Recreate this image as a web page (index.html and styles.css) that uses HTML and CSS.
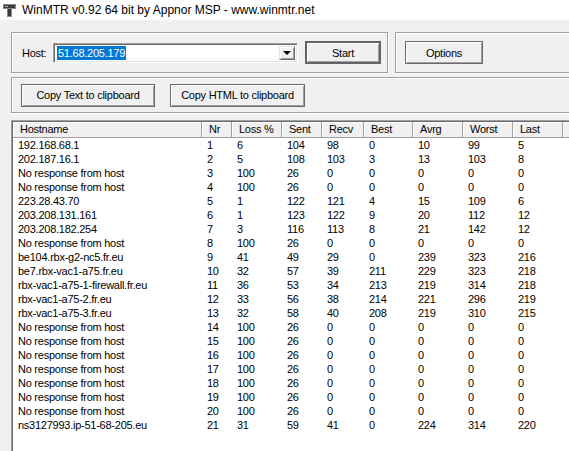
FILE: index.html
```html
<!DOCTYPE html>
<html>
<head>
<meta charset="utf-8">
<link rel="stylesheet" href="styles.css">
</head>
<body>
<div class="window">
  <div class="titlebar">
    <svg class="appicon" width="16" height="16" viewBox="0 0 16 16">
      <rect x="2.5" y="2.5" width="12" height="4" fill="#3a3a3a" stroke="#8a8a8a"/>
      <rect x="6.5" y="6.5" width="4" height="8" fill="#3a3a3a" stroke="#8a8a8a"/>
      <rect x="4" y="4" width="3" height="1" fill="#bbbbbb"/>
    </svg>
    <span class="title">WinMTR v0.92 64 bit by Appnor MSP - www.winmtr.net</span>
  </div>
  <div class="client">
    <div class="row1">
      <div class="group hostgroup">
        <span class="label">Host:</span>
        <div class="combo">
          <div class="combo-text"><span class="sel">51.68.205.179</span></div>
          <div class="combo-btn"><span class="arrow"></span></div>
        </div>
        <button class="btn default start">Start</button>
      </div>
      <div class="group optgroup">
        <button class="btn options">Options</button>
      </div>
    </div>
    <div class="group copygroup">
      <button class="btn copytext">Copy Text to clipboard</button>
      <button class="btn copyhtml">Copy HTML to clipboard</button>
    </div>
    <div class="list">
      <div class="grid header">
        <div class="hc">Hostname</div><div class="hc">Nr</div><div class="hc">Loss %</div><div class="hc">Sent</div><div class="hc">Recv</div><div class="hc">Best</div><div class="hc">Avrg</div><div class="hc">Worst</div><div class="hc">Last</div><div class="hc rest"></div>
      </div>
      <div class="rows">
        <div class="grid row"><div>192.168.68.1</div><div>1</div><div>6</div><div>104</div><div>98</div><div>0</div><div>10</div><div>99</div><div>5</div></div>
        <div class="grid row"><div>202.187.16.1</div><div>2</div><div>5</div><div>108</div><div>103</div><div>3</div><div>13</div><div>103</div><div>8</div></div>
        <div class="grid row"><div>No response from host</div><div>3</div><div>100</div><div>26</div><div>0</div><div>0</div><div>0</div><div>0</div><div>0</div></div>
        <div class="grid row"><div>No response from host</div><div>4</div><div>100</div><div>26</div><div>0</div><div>0</div><div>0</div><div>0</div><div>0</div></div>
        <div class="grid row"><div>223.28.43.70</div><div>5</div><div>1</div><div>122</div><div>121</div><div>4</div><div>15</div><div>109</div><div>6</div></div>
        <div class="grid row"><div>203.208.131.161</div><div>6</div><div>1</div><div>123</div><div>122</div><div>9</div><div>20</div><div>112</div><div>12</div></div>
        <div class="grid row"><div>203.208.182.254</div><div>7</div><div>3</div><div>116</div><div>113</div><div>8</div><div>21</div><div>142</div><div>12</div></div>
        <div class="grid row"><div>No response from host</div><div>8</div><div>100</div><div>26</div><div>0</div><div>0</div><div>0</div><div>0</div><div>0</div></div>
        <div class="grid row"><div>be104.rbx-g2-nc5.fr.eu</div><div>9</div><div>41</div><div>49</div><div>29</div><div>0</div><div>239</div><div>323</div><div>216</div></div>
        <div class="grid row"><div>be7.rbx-vac1-a75.fr.eu</div><div>10</div><div>32</div><div>57</div><div>39</div><div>211</div><div>229</div><div>323</div><div>218</div></div>
        <div class="grid row"><div>rbx-vac1-a75-1-firewall.fr.eu</div><div>11</div><div>36</div><div>53</div><div>34</div><div>213</div><div>219</div><div>314</div><div>218</div></div>
        <div class="grid row"><div>rbx-vac1-a75-2.fr.eu</div><div>12</div><div>33</div><div>56</div><div>38</div><div>214</div><div>221</div><div>296</div><div>219</div></div>
        <div class="grid row"><div>rbx-vac1-a75-3.fr.eu</div><div>13</div><div>32</div><div>58</div><div>40</div><div>208</div><div>219</div><div>310</div><div>215</div></div>
        <div class="grid row"><div>No response from host</div><div>14</div><div>100</div><div>26</div><div>0</div><div>0</div><div>0</div><div>0</div><div>0</div></div>
        <div class="grid row"><div>No response from host</div><div>15</div><div>100</div><div>26</div><div>0</div><div>0</div><div>0</div><div>0</div><div>0</div></div>
        <div class="grid row"><div>No response from host</div><div>16</div><div>100</div><div>26</div><div>0</div><div>0</div><div>0</div><div>0</div><div>0</div></div>
        <div class="grid row"><div>No response from host</div><div>17</div><div>100</div><div>26</div><div>0</div><div>0</div><div>0</div><div>0</div><div>0</div></div>
        <div class="grid row"><div>No response from host</div><div>18</div><div>100</div><div>26</div><div>0</div><div>0</div><div>0</div><div>0</div><div>0</div></div>
        <div class="grid row"><div>No response from host</div><div>19</div><div>100</div><div>26</div><div>0</div><div>0</div><div>0</div><div>0</div><div>0</div></div>
        <div class="grid row"><div>No response from host</div><div>20</div><div>100</div><div>26</div><div>0</div><div>0</div><div>0</div><div>0</div><div>0</div></div>
        <div class="grid row"><div>ns3127993.ip-51-68-205.eu</div><div>21</div><div>31</div><div>59</div><div>41</div><div>0</div><div>224</div><div>314</div><div>220</div></div>
      </div>
    </div>
  </div>
</div>
</body>
</html>
```

FILE: styles.css
```css
* { box-sizing: border-box; }
html, body {
  margin: 0;
  padding: 0;
  width: 569px;
  height: 451px;
  overflow: hidden;
  background: #f0f0f0;
}
.window {
  width: 569px;
  height: 451px;
  overflow: hidden;
  font-family: "Liberation Sans", Arial, sans-serif;
  font-size: 11px;
  letter-spacing: -0.25px;
  color: #000;
}
.titlebar {
  height: 20px;
  background: #fff;
  display: flex;
  align-items: center;
  padding-left: 1px;
}
.appicon { flex: none; }
.title {
  margin-left: 5px;
  font-family: "Liberation Sans", Arial, sans-serif;
  font-size: 12px;
  letter-spacing: 0;
  color: #000;
  white-space: nowrap;
}
.client {
  padding-left: 11px;
  width: 700px;
}
.row1 {
  display: flex;
  margin-top: 12px;
}
.group {
  border: 1px solid #a0a0a0;
  box-shadow: inset 1px 1px #fff, 1px 1px #fff;
  display: flex;
  align-items: center;
}
.hostgroup {
  width: 377px;
  height: 41px;
  padding-left: 9px;
}
.optgroup {
  margin-left: 7px;
  width: 300px;
  height: 41px;
  padding-left: 9px;
}
.label {
  width: 32px;
  flex: none;
  padding-left: 1px;
}
.combo {
  width: 245px;
  height: 20px;
  flex: none;
  display: flex;
  align-items: stretch;
  background: #fff;
  border-top: 1px solid #a0a0a0;
  border-left: 1px solid #a0a0a0;
  border-right: 1px solid #fff;
  border-bottom: 1px solid #fff;
  box-shadow: inset 1px 1px #696969, inset -1px -1px #e3e3e3;
  padding: 2px;
}
.combo-text {
  flex: 1;
  display: flex;
  align-items: center;
  padding-left: 1px;
}
.sel {
  background: #0078d7;
  color: #fff;
  line-height: 14px;
  padding: 0 1px;
}
.combo-btn {
  width: 16px;
  flex: none;
  background: #f0f0f0;
  border-top: 1px solid #e3e3e3;
  border-left: 1px solid #e3e3e3;
  border-right: 1px solid #696969;
  border-bottom: 1px solid #696969;
  box-shadow: inset 1px 1px #fff, inset -1px -1px #a0a0a0;
  display: flex;
  align-items: center;
  justify-content: center;
}
.arrow {
  width: 0;
  height: 0;
  border-left: 4px solid transparent;
  border-right: 4px solid transparent;
  border-top: 4px solid #000;
  margin-top: 1px;
}
.btn {
  font-family: "Liberation Sans", Arial, sans-serif;
  font-size: 11px;
  letter-spacing: -0.25px;
  color: #000;
  background: #f0f0f0;
  height: 23px;
  padding: 0;
  border: 1px solid #696969;
  box-shadow: inset 1px 1px #fff, inset -1px -1px #a0a0a0;
  flex: none;
}
.btn.default {
  border: 2px solid #646464;
  box-shadow: inset 1px 1px #fff, inset -1px -1px #a0a0a0;
}
.start {
  width: 76px;
  margin-left: 7px;
}
.options {
  width: 78px;
}
.copygroup {
  margin-top: 4px;
  height: 36px;
  width: 620px;
  padding-left: 9px;
  gap: 15px;
}
.copytext { width: 134px; }
.copyhtml { width: 135px; }
.list {
  margin-top: 7px;
  width: 620px;
  height: 340px;
  background: #fff;
  border-top: 1px solid #a0a0a0;
  border-left: 1px solid #a0a0a0;
  box-shadow: inset 1px 1px #696969;
  padding: 1px 0 0 1px;
}
.grid {
  display: grid;
  grid-template-columns: 189px 30px 50px 40px 42px 49px 50px 50px 50px 60px;
}
.header {
  height: 16px;
  background: #f0f0f0;
}
.hc {
  padding-left: 7px;
  line-height: 15px;
  border-right: 1px solid #a0a0a0;
  border-bottom: 1px solid #a0a0a0;
  box-shadow: inset 1px 1px #fff;
  white-space: nowrap;
}
.row {
  height: 14px;
  line-height: 14px;
}
.row div {
  padding-left: 5px;
  white-space: nowrap;
}
```
